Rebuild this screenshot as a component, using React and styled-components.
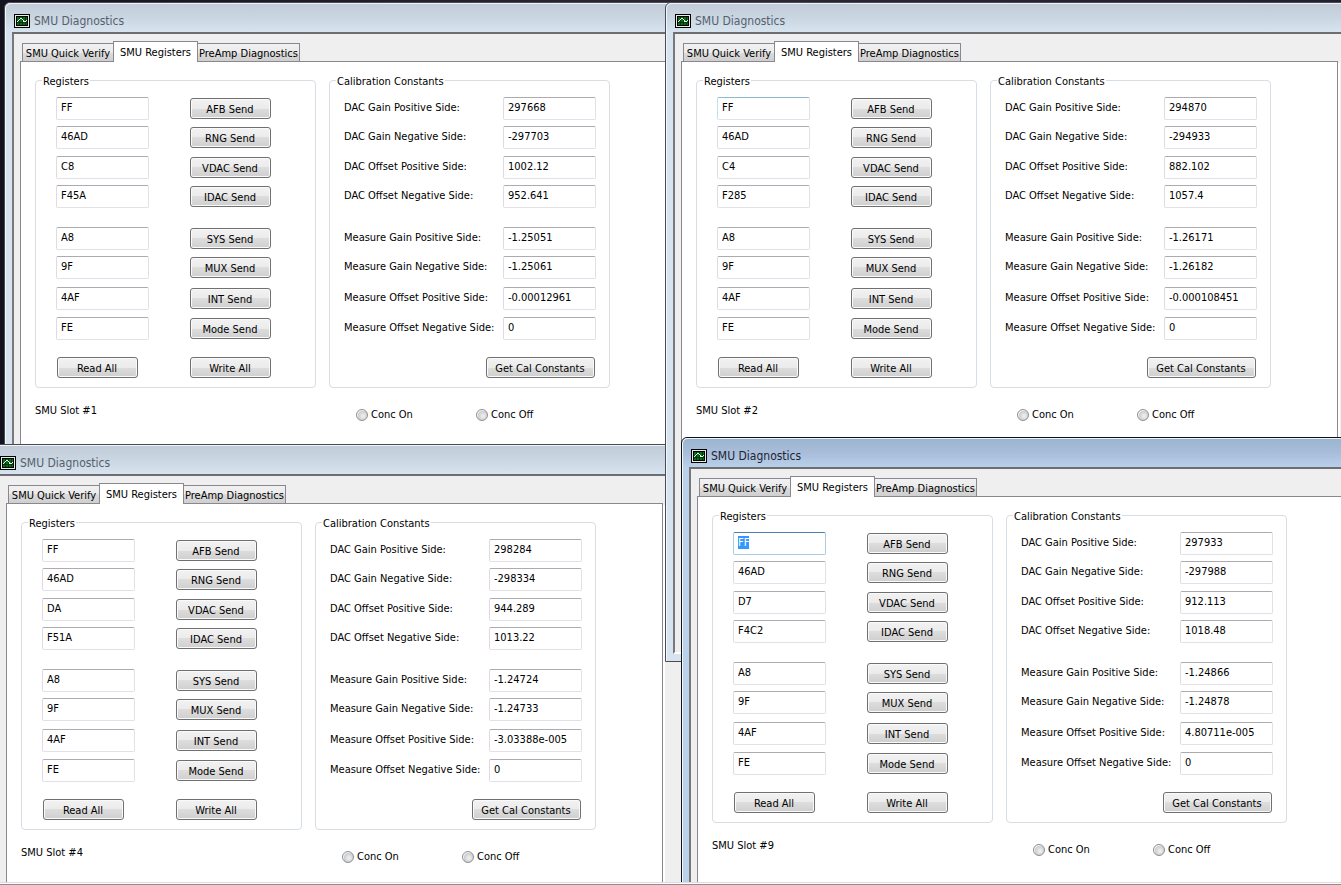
import React, { useEffect, useRef, useState } from 'react';
import styled, { createGlobalStyle } from 'styled-components';


const windows = [
    {
        slot: 1,
        left: 4,
        top: 2,
        registers: ['FF', '46AD', 'C8', 'F45A', 'A8', '9F', '4AF', 'FE'],
        constants: ['297668', '-297703', '1002.12', '952.641', '-1.25051', '-1.25061', '-0.00012961', '0'],
    },
    {
        slot: 4,
        left: -10,
        top: 444,
        registers: ['FF', '46AD', 'DA', 'F51A', 'A8', '9F', '4AF', 'FE'],
        constants: ['298284', '-298334', '944.289', '1013.22', '-1.24724', '-1.24733', '-3.03388e-005', '0'],
    },
    {
        slot: 2,
        left: 665,
        top: 2,
        hovered: true,
        registers: ['FF', '46AD', 'C4', 'F285', 'A8', '9F', '4AF', 'FE'],
        constants: ['294870', '-294933', '882.102', '1057.4', '-1.26171', '-1.26182', '-0.000108451', '0'],
    },
    {
        slot: 9,
        left: 681,
        top: 437,
        active: true,
        registers: ['FF', '46AD', 'D7', 'F4C2', 'A8', '9F', '4AF', 'FE'],
        constants: ['297933', '-297988', '912.113', '1018.48', '-1.24866', '-1.24878', '4.80711e-005', '0'],
    },
];

const registerNames = ['AFB', 'RNG', 'VDAC', 'IDAC', 'SYS', 'MUX', 'INT', 'Mode'];

const constantNames = [
    'DAC Gain Positive Side:',
    'DAC Gain Negative Side:',
    'DAC Offset Positive Side:',
    'DAC Offset Negative Side:',
    'Measure Gain Positive Side:',
    'Measure Gain Negative Side:',
    'Measure Offset Positive Side:',
    'Measure Offset Negative Side:',
];

const tabs = [
    { name: 'SMU Quick Verify', width: 92 },
    { name: 'SMU Registers', width: 85 },
    { name: 'PreAmp Diagnostics', width: 103 },
];

function ScopeIcon() {
    return (
        <svg width="16" height="14" viewBox="0 0 16 14" shapeRendering="crispEdges" aria-hidden="true">
            <rect x="0" y="0" width="16" height="14" rx="1" fill="#000" />
            <rect x="1" y="1" width="14" height="12" fill="#e6ece6" />
            <rect x="2" y="2" width="12" height="10" fill="#000" />
            <rect x="3" y="3" width="10" height="8" fill="#0b6b1c" />
            <path d="M5.5 3v8M8.5 3v8M11.5 3v8M3 8.5h10" stroke="#03380c" />
            <path d="M3 7.5h1M4 6.5h1M5 5.5h1M6 4.5h2M8 5.5h1M9 6.5h1M9 7.5h3M12 6.5h1" stroke="#e8fbe8" />
        </svg>
    );
}

function Registers({ slot, values, active, hovered }) {
    const first = useRef(null);

    useEffect(() => {
        if (active) {
            first.current.focus();
            first.current.select();
        }
    }, [active]);

    return (
        <StyledGroup>
            <legend>Registers</legend>
            <StyledRegisterGrid>
                {registerNames.map((name, i) => (
                    <React.Fragment key={name}>
                        <StyledInput
                            ref={i === 0 ? first : null}
                            aria-label={`${name} register, slot ${slot}`}
                            defaultValue={values[i]}
                            $hot={hovered && i === 0}
                        />
                        <StyledButton type="button">{name} Send</StyledButton>
                    </React.Fragment>
                ))}
                <StyledButton type="button">Read All</StyledButton>
                <StyledButton type="button">Write All</StyledButton>
            </StyledRegisterGrid>
        </StyledGroup>
    );
}

function Constants({ slot, values }) {
    return (
        <StyledGroup>
            <legend>Calibration Constants</legend>
            <StyledConstantGrid>
                {constantNames.map((name, i) => (
                    <React.Fragment key={name}>
                        <StyledLabel htmlFor={`constant-${slot}-${i}`}>{name}</StyledLabel>
                        <StyledInput id={`constant-${slot}-${i}`} defaultValue={values[i]} />
                    </React.Fragment>
                ))}
                <StyledButton type="button" $wide>Get Cal Constants</StyledButton>
            </StyledConstantGrid>
        </StyledGroup>
    );
}

function DiagnosticsWindow({ slot, left, top, active, hovered, registers, constants }) {
    const [tab, setTab] = useState(1);

    return (
        <StyledWindow $left={left} $top={top} $active={active}>
            <StyledTitleBar $active={active}>
                <ScopeIcon />
                <h2>SMU Diagnostics</h2>
            </StyledTitleBar>
            <StyledClient>
                <StyledTabs role="tablist">
                    {tabs.map(({ name, width }, i) => (
                        <StyledTab
                            key={name}
                            type="button"
                            role="tab"
                            aria-selected={tab === i}
                            $selected={tab === i}
                            $width={width}
                            onClick={() => setTab(i)}
                        >
                            {name}
                        </StyledTab>
                    ))}
                </StyledTabs>
                <StyledPane>
                    <StyledGroups>
                        <Registers slot={slot} values={registers} active={active} hovered={hovered} />
                        <Constants slot={slot} values={constants} />
                    </StyledGroups>
                    <StyledFooter>
                        <span>SMU Slot #{slot}</span>
                        <StyledRadio>
                            <input type="radio" name={`conc-${slot}`} />
                            Conc On
                        </StyledRadio>
                        <StyledRadio>
                            <input type="radio" name={`conc-${slot}`} />
                            Conc Off
                        </StyledRadio>
                    </StyledFooter>
                </StyledPane>
            </StyledClient>
        </StyledWindow>
    );
}

export default function App() {
    return (
        <>
            <GlobalStyle />
            <StyledScreen>
                <StyledDesktop>
                    {windows.map((win) => <DiagnosticsWindow key={win.slot} {...win} />)}
                </StyledDesktop>
                <StyledEdge />
            </StyledScreen>
        </>
    );
}

const GlobalStyle = createGlobalStyle`
*, *::before, *::after {
    box-sizing: border-box;
}
body {
    margin: 0;
    overflow: hidden;
    font: 11px Tahoma, "DejaVu Sans Condensed", sans-serif;
}
button, input {
    font: inherit;
    color: inherit;
}
`
const StyledScreen = styled.div`
    display: flex;
    flex-direction: column;
    height: 100vh;
    color: #000;
`
const StyledDesktop = styled.main`
    position: relative;
    flex: 1;
    overflow: hidden;
    background: linear-gradient(90deg, #14121f, #2c2634 50%, #221f30);
`
const StyledEdge = styled.div`
    height: 3px;
    background: #fff;
    border-top: 1px solid #dcdcdc;
    border-bottom: 1px solid #8e8e8e;
`
const StyledWindow = styled.section`
    position: absolute;
    left: ${({ $left }) => $left}px;
    top: ${({ $top }) => $top}px;
    display: flex;
    flex-direction: column;
    width: 720px;
    height: 660px;
    padding: 0 7px 7px;
    border: 1px solid ${({ $active }) => ($active ? '#10141a' : '#4c4a52')};
    border-radius: 6px 6px 0 0;
    background: ${({ $active }) => ($active ? '#b9d1ea' : '#d7e4f0')};
    box-shadow: inset 1px 1px 0 #f2f7fc;
`
const StyledTitleBar = styled.header`
    display: flex;
    align-items: center;
    gap: 4px;
    flex: none;
    height: 29px;
    margin: 0 -6px;
    padding: 5px 8px 0;
    background: ${({ $active }) => ($active
        ? 'linear-gradient(#9ab5cf, #a9bddb 50%, #b8d0ea)'
        : 'linear-gradient(#c1ccd8, #cad6e2 50%, #d7e3ef)')};
    border-top: 1px solid #eef3f8;
    border-radius: 5px 0 0 0;
    color: ${({ $active }) => ($active ? '#1c2530' : '#55606c')};
    h2 {
        margin: 0;
        padding-top: 1px;
        font-size: 12px;
        font-weight: normal;
        line-height: 16px;
    }
`
const StyledClient = styled.div`
    display: flex;
    flex-direction: column;
    flex: 1;
    padding: 7px 37px 6px 6px;
    border: 2px solid #6d6d72;
    border-color: #6d6d72 #fff #fff #77777c;
    background: #efefef;
`
const StyledTabs = styled.div`
    display: flex;
    align-items: flex-end;
    height: 20px;
    padding-left: 2px;
`
const StyledTab = styled.button`
    width: ${({ $width }) => $width}px;
    height: ${({ $selected }) => ($selected ? 21 : 18)}px;
    margin: 0 0 ${({ $selected }) => ($selected ? -1 : 0)}px -1px;
    padding: ${({ $selected }) => ($selected ? 0 : 2)}px 0 0;
    border: 1px solid #8b868f;
    border-bottom: 0;
    background: ${({ $selected }) => ($selected ? '#fff' : 'linear-gradient(#f1f1f1, #ebebeb 50%, #dcdcdc 50%, #cfcfcf)')};
    position: relative;
    z-index: ${({ $selected }) => ($selected ? 1 : 0)};
    line-height: 15px;
    white-space: nowrap;
    &:first-child {
        margin-left: 0;
    }
`
const StyledPane = styled.div`
    flex: 1;
    padding: 10px 14px;
    border: 1px solid #8b868f;
    background: #fff;
    box-shadow: 2px 2px 0 #fff;
`
const StyledGroups = styled.div`
    display: flex;
    gap: 13px;
`
const StyledGroup = styled.fieldset`
    width: 281px;
    height: 316px;
    margin: 0;
    padding: 8px 13px 0;
    border: 1px solid #d8dde3;
    border-radius: 4px;
    legend {
        margin-left: -7px;
        padding: 3px 1px 0;
        line-height: 14px;
    }
`
const StyledRegisterGrid = styled.div`
    display: grid;
    grid-template-columns: 133px 82px;
    grid-template-rows: 29px 30px 29px 42px 29px 31px 30px 39px 22px;
    padding-left: 7px;
`
const StyledConstantGrid = styled(StyledRegisterGrid)`
    grid-template-columns: 159px 93px;
    padding-left: 1px;
`
const StyledInput = styled.input`
    width: 93px;
    height: 23px;
    padding: 0 4px 2px;
    border: 1px solid #e3e1e6;
    border-top-color: ${({ $hot }) => ($hot ? '#8fb8cc' : '#aeaab2')};
    border-left-color: ${({ $hot }) => ($hot ? '#c4e0ec' : '#e0dae2')};
    border-radius: 2px;
    background: #fff;
    line-height: 19px;
    &:focus {
        outline: 0;
        border-color: #4a7eb0 #a9cbe4 #a9cbe4;
    }
    &::selection {
        background: #3399ff;
        color: #fff;
    }
`
const StyledButton = styled.button`
    width: ${({ $wide }) => ($wide ? 109 : 81)}px;
    height: 21px;
    margin: 1px 1px 0;
    padding: 2px 1px 0 0;
    border: 1px solid #707070;
    border-radius: 3px;
    background: linear-gradient(#f2f2f2, #ebebeb 50%, #dddddd 50%, #cfcfcf);
    box-shadow: inset 0 0 0 1px #fafafa;
    line-height: 17px;
    white-space: nowrap;
    ${({ $wide }) => $wide && `
        grid-column: 1 / 3;
        justify-self: end;
    `}
`
const StyledLabel = styled.label`
    line-height: 22px;
    white-space: nowrap;
`
const StyledFooter = styled.div`
    display: grid;
    grid-template-columns: 321px 120px 120px;
    margin-top: 16px;
    line-height: 14px;
`
const StyledRadio = styled.label`
    display: flex;
    align-items: center;
    gap: 3px;
    padding-top: 4px;
    input {
        appearance: none;
        width: 12px;
        height: 12px;
        margin: 0;
        border: 1px solid #8e8f8f;
        border-radius: 50%;
        background: radial-gradient(circle at 60% 60%, #f2f2f2, #c9ccd0 60%, #f4f4f4 62%);
    }
`
